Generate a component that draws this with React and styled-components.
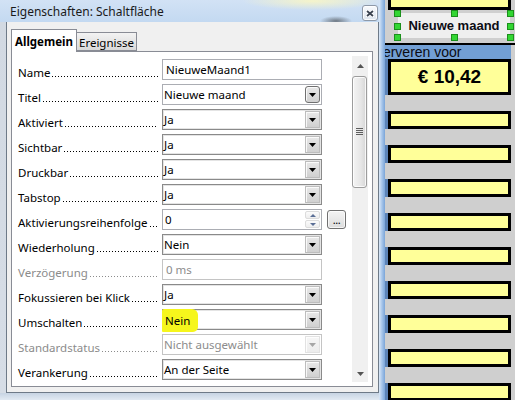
import React from 'react';
import styled, { createGlobalStyle } from 'styled-components';

const GlobalStyle = createGlobalStyle`
  *, *::before, *::after { box-sizing: border-box; }
  html, body { margin: 0; padding: 0; }
  body {
    width: 515px;
    height: 400px;
    overflow: hidden;
    font-family: "Noto Sans", "Open Sans", sans-serif;
  }
`;

const fields = [
  { label: 'Name', kind: 'text', value: 'NieuweMaand1' },
  { label: 'Titel', kind: 'select', value: 'Nieuwe maand', soft: true },
  { label: 'Aktiviert', kind: 'select', value: 'Ja' },
  { label: 'Sichtbar', kind: 'select', value: 'Ja' },
  { label: 'Druckbar', kind: 'select', value: 'Ja' },
  { label: 'Tabstop', kind: 'select', value: 'Ja' },
  { label: 'Aktivierungsreihenfolge', kind: 'spin', value: '0', more: true },
  { label: 'Wiederholung', kind: 'select', value: 'Nein' },
  { label: 'Verzögerung', kind: 'text', value: '0 ms', disabled: true },
  { label: 'Fokussieren bei Klick', kind: 'select', value: 'Ja' },
  { label: 'Umschalten', kind: 'select', value: 'Nein', marked: true },
  { label: 'Standardstatus', kind: 'select', value: 'Nicht ausgewählt', disabled: true },
  { label: 'Verankerung', kind: 'select', value: 'An der Seite' },
];

const Arrow = ({ up, color = '#000', w = 7, h = 4 }) => (
  <svg width={w} height={h} viewBox={`0 0 ${w} ${h}`}>
    <path d={up ? `M0 ${h}H${w}L${w / 2} 0Z` : `M0 0H${w}L${w / 2} ${h}Z`} fill={color} />
  </svg>
);

function Field({ f }) {
  if (f.kind === 'text') {
    return (
      <Box $tone={f.disabled ? 'faint' : 'soft'}>
        <Value $pad={3} $disabled={f.disabled}>{f.value}</Value>
      </Box>
    );
  }
  if (f.kind === 'spin') {
    return (
      <Box $tone="soft">
        <Value $pad={2}>{f.value}</Value>
        <Spin>
          <SpinHalf><Arrow up w={6} h={3} color="#5b6f96" /></SpinHalf>
          <SpinHalf><Arrow w={6} h={3} color="#5b6f96" /></SpinHalf>
        </Spin>
      </Box>
    );
  }
  return (
    <Box $tone={f.disabled ? 'faint' : f.soft ? 'soft' : 'strong'}>
      <Value $pad={1} $disabled={f.disabled}>
        {f.marked ? <Marker>{f.value}</Marker> : f.value}
      </Value>
      <DropButton $rounded={f.soft} $disabled={f.disabled}>
        <Arrow color={f.disabled ? '#a6a6a6' : '#000'} />
      </DropButton>
    </Box>
  );
}

export default function App() {
  return (
    <>
      <GlobalStyle />
      <Screen>
        <Sheet>
          <Row $h={10}>
            <Side />
            <Cell $open />
          </Row>
          <Row $h={33}>
            <Side />
            <ControlSlot>
              <SheetButton>
                Nieuwe maand
                <Handle $x="left" $y="top" />
                <Handle $x="mid" $y="top" />
                <Handle $x="right" $y="top" />
                <Handle $x="left" $y="mid" />
                <Handle $x="right" $y="mid" />
                <Handle $x="left" $y="bottom" />
                <Handle $x="mid" $y="bottom" />
                <Handle $x="right" $y="bottom" />
              </SheetButton>
            </ControlSlot>
          </Row>
          <HeaderRow>
            <HeaderCell>Reserveren voor</HeaderCell>
          </HeaderRow>
          <Row $h={36}>
            <Side $blue />
            <Cell $big>€ 10,42</Cell>
          </Row>
          {Array.from({ length: 9 }).map((_, i) => (
            <Row key={i} $h={18} $gap={16}>
              <Side $blue />
              <Cell />
            </Row>
          ))}
        </Sheet>

        <Window>
          <TitleBar>
            <TitleText>Eigenschaften: Schaltfläche</TitleText>
            <CloseButton>
              <svg width="8" height="7" viewBox="0 0 8 7">
                <path d="M1 1L7 6M7 1L1 6" stroke="#fff" strokeWidth="3.2" strokeLinecap="square" />
                <path d="M1 1L7 6M7 1L1 6" stroke="#3a4250" strokeWidth="1.8" />
              </svg>
            </CloseButton>
          </TitleBar>
          <Client>
            <TabRow>
              <Tab $active>Allgemein</Tab>
              <Tab>Ereignisse</Tab>
            </TabRow>
            <Panel>
              <Fields>
                {fields.map((f) => (
                  <FieldRow key={f.label}>
                    <Label $disabled={f.disabled}>
                      <LabelText>{f.label}</LabelText>
                      <Leader />
                    </Label>
                    <Field f={f} />
                    {f.more && <MoreButton>...</MoreButton>}
                  </FieldRow>
                ))}
              </Fields>
              <Scrollbar>
                <ScrollEnd $h={20}><Arrow up color="#555" /></ScrollEnd>
                <Thumb>
                  <Grip />
                </Thumb>
                <ScrollTrack />
                <ScrollEnd $h={16}><Arrow color="#555" /></ScrollEnd>
              </Scrollbar>
            </Panel>
          </Client>
        </Window>
      </Screen>
    </>
  );
}

/* ---------- sheet behind the dialog ---------- */

const Screen = styled.div`
  position: relative;
  width: 515px;
  height: 400px;
  overflow: hidden;
  background: #cfcfcf;
`;

const Sheet = styled.div`
  display: flex;
  flex-direction: column;
  height: 100%;
`;

const Row = styled.div`
  flex: none;
  display: grid;
  grid-template-columns: 388px 123px 1fr;
  height: ${(p) => p.$h}px;
  margin-top: ${(p) => p.$gap || 0}px;
`;

const Side = styled.div`
  background: ${(p) => (p.$blue ? '#5d84b8' : 'transparent')};
`;

const Cell = styled.div`
  background: #ffff99;
  border: 3px solid #000;
  border-top: ${(p) => (p.$open ? 'none' : '3px solid #000')};
  display: flex;
  align-items: center;
  justify-content: center;
  font-family: "Liberation Sans", Arial, sans-serif;
  font-weight: bold;
  font-size: ${(p) => (p.$big ? '19px' : '12px')};
  color: #000;
`;

const ControlSlot = styled.div`
  padding: 3px 1px 5px 10px;
`;

const SheetButton = styled.div`
  position: relative;
  height: 25px;
  background: #efefef;
  display: flex;
  align-items: center;
  justify-content: center;
  font-family: "Liberation Sans", Arial, sans-serif;
  font-weight: bold;
  font-size: 13px;
  color: #0c0c14;
`;

const handleX = { left: '-4px', mid: 'calc(50% - 3px)', right: 'calc(100% - 3px)' };
const handleY = { top: '-3px', mid: 'calc(50% - 3px)', bottom: 'calc(100% - 4px)' };

const Handle = styled.span`
  position: absolute;
  left: ${(p) => handleX[p.$x]};
  top: ${(p) => handleY[p.$y]};
  width: 7px;
  height: 7px;
  background: #33d633;
  border: 1px solid #1b8f1b;
`;

const HeaderRow = styled.div`
  flex: none;
  height: 16px;
  border-top: 2px solid #000;
  display: grid;
  grid-template-columns: 511px 1fr;
`;

const HeaderCell = styled.div`
  background: #729fd4;
  padding-left: 358px;
  font-family: "Liberation Sans", Arial, sans-serif;
  font-size: 14px;
  line-height: 14px;
  color: #0b0b12;
  white-space: nowrap;
  overflow: hidden;
`;

/* ---------- dialog window ---------- */

const Window = styled.div`
  position: absolute;
  top: 0;
  left: 0;
  width: 385px;
  height: 400px;
  display: flex;
  flex-direction: column;
  font-family: "Noto Sans", "Open Sans", sans-serif;
  font-size: 11.5px;
  color: #000;
  background:
    radial-gradient(70px 9px at 312px 1px, rgba(247, 245, 200, 0.95), rgba(247, 245, 200, 0)),
    radial-gradient(16px 5px at 336px 21px, rgba(40, 40, 40, 0.55), rgba(40, 40, 40, 0)),
    linear-gradient(to right, #dce9f8, #a6c5ea 50%, #7aa5d9) 379px 0 / 6px 100% no-repeat,
    linear-gradient(#d2d9e2, #d6dde6) 0 22px / 6px 371px no-repeat,
    linear-gradient(#c7d4e3, #e2eaf3) 0 393px / 379px 7px no-repeat,
    linear-gradient(#d2e2f5, #c3d9f1 22px, #bcd3ee);
`;

const TitleBar = styled.div`
  flex: none;
  height: 22px;
  display: flex;
  align-items: flex-start;
  justify-content: space-between;
  padding: 0 7px 0 10px;
`;

const TitleText = styled.span`
  margin-top: 4px;
  line-height: 16px;
  font-size: 12px;
  color: #1a1a1a;
`;

const CloseButton = styled.div`
  width: 16px;
  height: 16px;
  margin-top: 5px;
  border: 1px solid #8e99a8;
  border-radius: 3px;
  background: linear-gradient(#f8fafd, #dfe6ef);
  box-shadow: inset 0 0 0 1px rgba(255, 255, 255, 0.8);
  display: flex;
  align-items: center;
  justify-content: center;
`;

const Client = styled.div`
  flex: 1;
  margin: 0 6px 7px 6px;
  border: 1px solid #6e7a88;
  border-top: none;
  background: #f0f0f0;
  padding: 7px 5px 5px 4px;
  display: flex;
  flex-direction: column;
`;

const TabRow = styled.div`
  flex: none;
  height: 23px;
  margin-bottom: -1px;
  display: flex;
  align-items: flex-end;
  position: relative;
  z-index: 1;
`;

const Tab = styled.div`
  display: flex;
  align-items: center;
  justify-content: center;
  border: 1px solid #898c95;
  border-bottom: ${(p) => (p.$active ? 'none' : '1px solid #898c95')};
  border-left: ${(p) => (p.$active ? '1px solid #898c95' : 'none')};
  width: ${(p) => (p.$active ? 66 : 60)}px;
  height: ${(p) => (p.$active ? 23 : 19)}px;
  margin-bottom: ${(p) => (p.$active ? 0 : 1)}px;
  padding-top: ${(p) => (p.$active ? 0 : 1)}px;
  background: ${(p) => (p.$active ? '#fff' : 'linear-gradient(#f3f3f3, #e6e6e6 50%, #d9d9d9)')};
  font-weight: ${(p) => (p.$active ? 'bold' : 'normal')};
  color: #000;
`;

const Panel = styled.div`
  flex: 1;
  background: #fff;
  border: 1px solid #898c95;
  padding: 4px 4px 4px 6px;
  display: flex;
  gap: 6px;
`;

const Fields = styled.div`
  width: 328px;
  margin-top: 3px;
  display: flex;
  flex-direction: column;
  gap: 4px;
`;

const FieldRow = styled.div`
  display: grid;
  grid-template-columns: 144px 160px 24px;
  grid-template-rows: 21px;
  & > :nth-child(3) { margin-left: 5px; }
`;

const Label = styled.div`
  width: 140px;
  height: 21px;
  margin-top: 3px;
  display: flex;
  line-height: 21px;
  white-space: nowrap;
  color: ${(p) => (p.$disabled ? '#8b8b8b' : '#000')};
`;

const LabelText = styled.span`
  flex: none;
`;

const Leader = styled.span`
  flex: 1;
  margin-left: 1px;
  background-image: linear-gradient(to right, currentColor 1px, transparent 1px);
  background-size: 3px 1px;
  background-repeat: repeat-x;
  background-position: 1px 14px;
`;

const boxBorder = { strong: '#8a8a8a', soft: '#abadb3', faint: '#c4c4c4' };

const Box = styled.div`
  height: 21px;
  display: flex;
  align-items: stretch;
  border: 1px solid ${(p) => boxBorder[p.$tone]};
  box-shadow: ${(p) => (p.$tone === 'strong' ? 'inset 0 0 0 1px #e4e4e4' : 'none')};
  background: #fff;
  line-height: 19px;
`;

const Value = styled.span`
  flex: 1;
  padding-left: ${(p) => p.$pad}px;
  white-space: nowrap;
  color: ${(p) => (p.$disabled ? '#8c8c8c' : '#000')};
`;

const Marker = styled.span`
  display: inline-block;
  vertical-align: top;
  height: 23px;
  line-height: 23px;
  margin: -1px 0 -3px -2px;
  padding: 0 8px 0 3px;
  background: #f6f61c;
  border-radius: 2px 6px 5px 1px;
`;

const DropButton = styled.div`
  flex: none;
  width: 15px;
  margin: 1px 1px 1px 0;
  display: flex;
  align-items: center;
  justify-content: center;
  background: ${(p) => (p.$disabled ? 'linear-gradient(#f6f6f6, #ececec)' : 'linear-gradient(#e8e8e8, #d0d0d0)')};
  border: 1px solid ${(p) => (p.$rounded ? '#707070' : p.$disabled ? '#e2e2e2' : '#bdbdbd')};
  border-radius: ${(p) => (p.$rounded ? 3 : 0)}px;
  box-shadow: inset 1px 1px 0 rgba(255, 255, 255, 0.8);
`;

const Spin = styled.div`
  flex: none;
  width: 15px;
  margin: 1px 1px 1px 0;
  display: flex;
  flex-direction: column;
  gap: 1px;
`;

const SpinHalf = styled.div`
  flex: 1;
  display: flex;
  align-items: center;
  justify-content: center;
  border: 1px solid #dcdcdc;
  border-radius: 2px;
  background: linear-gradient(#fbfbfb, #eeeeee);
`;

const MoreButton = styled.div`
  width: 19px;
  height: 19px;
  margin-top: 1px;
  border: 1px solid #707070;
  border-radius: 3px;
  background: linear-gradient(#f4f4f4, #dcdcdc);
  box-shadow: inset 0 0 0 1px rgba(255, 255, 255, 0.7);
  display: flex;
  align-items: center;
  justify-content: center;
  line-height: 1;
  padding-bottom: 1px;
  font-size: 11px;
  letter-spacing: -0.5px;
`;

const Scrollbar = styled.div`
  flex: none;
  width: 16px;
  background: #f0f0f0;
  display: flex;
  flex-direction: column;
`;

const ScrollEnd = styled.div`
  flex: none;
  height: ${(p) => p.$h}px;
  display: flex;
  align-items: center;
  justify-content: center;
  padding-bottom: ${(p) => (p.$h === 20 ? 1 : 0)}px;
`;

const Thumb = styled.div`
  flex: none;
  height: 112px;
  margin: 0 1px 0 0;
  border: 1px solid #9c9c9c;
  border-radius: 3px;
  background: linear-gradient(to right, #f4f4f4, #e6e6e6 60%, #d6d6d6);
  box-shadow: inset 0 0 0 1px rgba(255, 255, 255, 0.8);
  display: flex;
  align-items: center;
  justify-content: center;
`;

const Grip = styled.div`
  width: 7px;
  height: 8px;
  background: repeating-linear-gradient(#5e5e5e 0 1px, transparent 1px 2px);
`;

const ScrollTrack = styled.div`
  flex: 1;
`;
